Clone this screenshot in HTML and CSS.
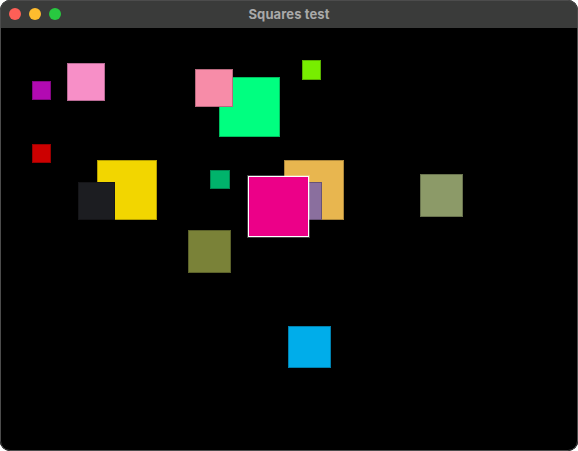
FILE: index.html
```html
<!DOCTYPE html>
<html>
<head>
<meta charset="utf-8">
<title>Squares test</title>
<link rel="stylesheet" href="styles.css">
</head>
<body>
<div class="window">
  <div class="titlebar">
    <div class="lights">
      <span class="light red"></span>
      <span class="light yellow"></span>
      <span class="light green"></span>
    </div>
    <div class="title">Squares test</div>
  </div>
  <div class="canvas">
    <div class="sq" style="left:32px;top:53px;width:19px;height:19px;background:#b20ab2"></div>
    <div class="sq" style="left:67px;top:35px;width:38px;height:38px;background:#f78fc7"></div>
    <div class="sq" style="left:32px;top:116px;width:19px;height:19px;background:#cc0000"></div>
    <div class="sq" style="left:97px;top:132px;width:60px;height:60px;background:#f2d600"></div>
    <div class="sq" style="left:78px;top:154px;width:37px;height:38px;background:#1c1d21"></div>
    <div class="sq" style="left:219px;top:49px;width:61px;height:60px;background:#00ff80"></div>
    <div class="sq" style="left:195px;top:41px;width:38px;height:38px;background:#f78ca8"></div>
    <div class="sq" style="left:302px;top:32px;width:19px;height:20px;background:#77ee00"></div>
    <div class="sq" style="left:210px;top:142px;width:20px;height:19px;background:#00b36b"></div>
    <div class="sq" style="left:188px;top:202px;width:43px;height:43px;background:#7a8238"></div>
    <div class="sq" style="left:284px;top:132px;width:60px;height:60px;background:#e8b64f"></div>
    <div class="sq" style="left:284px;top:154px;width:38px;height:38px;background:#8a6f9e"></div>
    <div class="sq sel" style="left:248px;top:148px;width:61px;height:61px;background:#ec0088"></div>
    <div class="sq" style="left:420px;top:146px;width:43px;height:43px;background:#8c9a68"></div>
    <div class="sq" style="left:288px;top:298px;width:43px;height:42px;background:#00adea"></div>
  </div>
</div>
</body>
</html>
```

FILE: styles.css
```css
html, body {
  margin: 0;
  padding: 0;
  background: #ffffff;
}

.window {
  position: relative;
  width: 578px;
  height: 451px;
  border-radius: 10px;
  overflow: hidden;
  background: #000;
  display: flex;
  flex-direction: column;
}

.window::after {
  content: "";
  position: absolute;
  inset: 0;
  border: 1px solid #4c4c4c;
  border-radius: 10px;
  pointer-events: none;
}

.titlebar {
  position: relative;
  height: 28px;
  flex: 0 0 28px;
  background: #3a3b3a;
  display: flex;
  align-items: center;
  justify-content: center;
}

.lights {
  position: absolute;
  left: 9px;
  top: 8px;
  display: flex;
  gap: 8px;
}

.light {
  width: 12px;
  height: 12px;
  border-radius: 50%;
  display: block;
}

.light.red { background: #fe5f57; }
.light.yellow { background: #febc2e; }
.light.green { background: #28c840; }

.title {
  font-family: "Inter", "Liberation Sans", sans-serif;
  font-weight: 700;
  font-size: 13px;
  color: #a9a9a9;
  letter-spacing: 0.1px;
}

.canvas {
  position: relative;
  flex: 1;
  background: #000;
}

.sq {
  position: absolute;
  box-sizing: border-box;
  border: 1px solid rgba(0, 0, 0, 0.25);
}

.sq.sel {
  border: 1px solid #ffffff;
  box-shadow: 0 0 0 1px rgba(255, 255, 255, 0.25);
}
```
